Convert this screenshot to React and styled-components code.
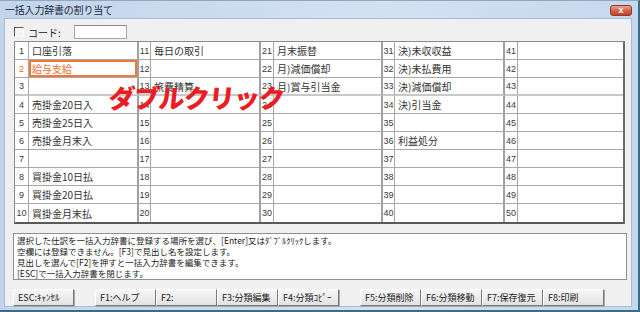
import React from 'react';
import styled, { createGlobalStyle } from 'styled-components';

const GlobalStyle = createGlobalStyle`
  html, body {
    margin: 0;
    padding: 0;
  }
  body {
    width: 640px;
    height: 312px;
    overflow: hidden;
    background: #c4d7ed;
    font-family: "Noto Sans CJK JP", "Liberation Sans", sans-serif;
  }
`;

const names = [
  ['口座引落', '毎日の取引', '月末振替', '決)未収収益', ''],
  ['給与支給', '', '月)減価償却', '決)未払費用', ''],
  ['', '旅費精算', '月)賞与引当金', '決)減価償却', ''],
  ['売掛金20日入', '', '', '決)引当金', ''],
  ['売掛金25日入', '', '', '', ''],
  ['売掛金月末入', '', '', '利益処分', ''],
  ['', '', '', '', ''],
  ['買掛金10日払', '', '', '', ''],
  ['買掛金20日払', '', '', '', ''],
  ['買掛金月末払', '', '', '', ''],
];

const messages = [
  '選択した仕訳を一括入力辞書に登録する場所を選び、[Enter]又はﾀﾞﾌﾞﾙｸﾘｯｸします。',
  '空欄には登録できません。[F3]で見出し名を設定します。',
  '見出しを選んで[F2]を押すと一括入力辞書を編集できます。',
  '[ESC]で一括入力辞書を閉じます。',
];

const App = () => {
  return (
    <>
      <GlobalStyle />
      <Window>
        <TitleBar>
          <Title>一括入力辞書の割り当て</Title>
          <CloseButton>x</CloseButton>
        </TitleBar>
        <Body>
          <CodeRow>
            <CheckBox />
            <CodeLabel>コード:</CodeLabel>
            <CodeInput />
          </CodeRow>
          <TableWrap>
            <Grid>
              {names.map((row, r) =>
                row.map((name, c) => {
                  const num = c * 10 + r + 1;
                  const selected = num === 2;
                  const last = c === row.length - 1;
                  return (
                    <React.Fragment key={num}>
                      <NumCell $row={r} $selected={selected}>
                        {num}
                      </NumCell>
                      <NameCell $row={r} $last={last} $selected={selected}>
                        {name}
                      </NameCell>
                    </React.Fragment>
                  );
                })
              )}
            </Grid>
            <DoubleClick>ダブルクリック</DoubleClick>
          </TableWrap>
          <MessageBox>
            {messages.map((line) => (
              <MessageLine key={line}>{line}</MessageLine>
            ))}
          </MessageBox>
          <ButtonBar>
            <ButtonGroup>
              <FnButton>ESC:ｷｬﾝｾﾙ</FnButton>
            </ButtonGroup>
            <ButtonGroup>
              <FnButton>F1:ヘルプ</FnButton>
              <FnButton>F2:</FnButton>
              <FnButton>F3:分類編集</FnButton>
              <FnButton>F4:分類ｺﾋﾟｰ</FnButton>
            </ButtonGroup>
            <ButtonGroup>
              <FnButton>F5:分類削除</FnButton>
              <FnButton>F6:分類移動</FnButton>
              <FnButton>F7:保存復元</FnButton>
              <FnButton>F8:印刷</FnButton>
            </ButtonGroup>
          </ButtonBar>
        </Body>
      </Window>
    </>
  );
};

export default App;

const Window = styled.div`
  width: 640px;
  height: 312px;
  box-sizing: border-box;
  display: flex;
  flex-direction: column;
  background: linear-gradient(90deg, #c2d5ec 0%, #d3e1f2 60%, #c6d8ee 100%);
  border-top: 1px solid #8fa6c0;
  border-right: 2px solid #3d6c86;
  border-bottom: 2px solid #3d6c86;
`;

const TitleBar = styled.div`
  height: 17px;
  display: flex;
  align-items: center;
  padding: 0 6px 0 5px;
`;

const Title = styled.span`
  font-size: 10px;
  color: #1b2838;
  letter-spacing: -0.2px;
`;

const CloseButton = styled.div`
  margin-left: auto;
  margin-top: 2px;
  width: 22px;
  height: 11px;
  box-sizing: border-box;
  border: 1px solid #8c3a2c;
  border-radius: 3px;
  background: linear-gradient(#eaa592 0%, #d6634a 50%, #c0432c 100%);
  color: #fff;
  font-family: "Liberation Sans", sans-serif;
  font-size: 9px;
  font-weight: 700;
  line-height: 9px;
  text-align: center;
`;

const Body = styled.div`
  flex: 1;
  margin: 0 6px 3px 4px;
  background: #f0f0f0;
  display: flex;
  flex-direction: column;
  padding: 6px 0 0 8px;
  border: 1px solid #a9bcd3;
`;

const CodeRow = styled.div`
  height: 14px;
  display: flex;
  align-items: center;
`;

const CheckBox = styled.div`
  width: 8px;
  height: 8px;
  margin-left: 1px;
  border-top: 1px solid #5a5a5a;
  border-left: 1px solid #5a5a5a;
  border-right: 1px solid #ffffff;
  border-bottom: 1px solid #ffffff;
  background: #f4f4f4;
`;

const CodeLabel = styled.span`
  margin-left: 4px;
  font-size: 10px;
  color: #222;
`;

const CodeInput = styled.div`
  margin-left: 13px;
  width: 53px;
  height: 14px;
  box-sizing: border-box;
  background: #fff;
  border: 1px solid #a6a6a6;
  border-top-color: #8a8a8a;
`;

const TableWrap = styled.div`
  position: relative;
  margin: 2px 0 0 1px;
  width: 611px;
`;

const Grid = styled.div`
  display: grid;
  grid-template-columns: 14px 110px 12px 110px 13px 109px 12px 110px 13px 1fr;
  grid-auto-rows: 18px;
  background: #fff;
  border-top: 1px solid #8c8c8c;
  border-left: 1px solid #8c8c8c;
  border-right: 2px solid #6a6a6a;
  border-bottom: 2px solid #5a5a5a;
`;

const Cell = styled.div`
  box-sizing: border-box;
  display: flex;
  align-items: center;
  font-size: 10px;
  color: #333;
  white-space: nowrap;
  overflow: hidden;
  border-bottom: ${({ $row }) =>
    $row === 9 ? 'none' : $row === 2 ? '2px solid #c8c8c8' : '1px solid #a8a8a8'};
`;

const NumCell = styled(Cell)`
  justify-content: center;
  font-family: "Liberation Sans", sans-serif;
  font-size: 9px;
  color: ${({ $selected }) => ($selected ? '#f06a28' : '#3a3a3a')};
  border-right: 1px solid #a8a8a8;
`;

const NameCell = styled(Cell)`
  padding-left: 3px;
  border-right: ${({ $last }) => ($last ? 'none' : '2px solid #a0a0a0')};
  color: ${({ $selected }) => ($selected ? '#f06a28' : '#333')};
  box-shadow: ${({ $selected }) => ($selected ? 'inset 0 0 0 2px #f4773a' : 'none')};
`;

const DoubleClick = styled.div`
  position: absolute;
  left: 95px;
  top: 37px;
  font-size: 26px;
  font-weight: 900;
  color: #ec1c24;
  letter-spacing: -1px;
  transform: skewX(-6deg);
  pointer-events: none;
`;

const MessageBox = styled.div`
  margin-top: 9px;
  width: 614px;
  height: 47px;
  box-sizing: border-box;
  background: #fff;
  border: 1px solid #8a8f98;
  padding: 1px 3px;
  color: #222;
  white-space: nowrap;
`;

const MessageLine = styled.div`
  height: 11px;
  font-size: 8.5px;
  line-height: 11px;
`;

const ButtonBar = styled.div`
  margin-top: 9px;
  display: flex;
  gap: 21px;
`;

const ButtonGroup = styled.div`
  display: flex;
`;

const FnButton = styled.div`
  width: 61px;
  height: 17px;
  box-sizing: border-box;
  display: flex;
  align-items: center;
  padding-left: 4px;
  background: linear-gradient(#f6f6f6, #e2e2e2);
  border: 1px solid;
  border-color: #ffffff #7a7a7a #7a7a7a #ffffff;
  box-shadow: 1px 1px 0 #a8a8a8;
  font-size: 9px;
  color: #222;
  white-space: nowrap;
`;
